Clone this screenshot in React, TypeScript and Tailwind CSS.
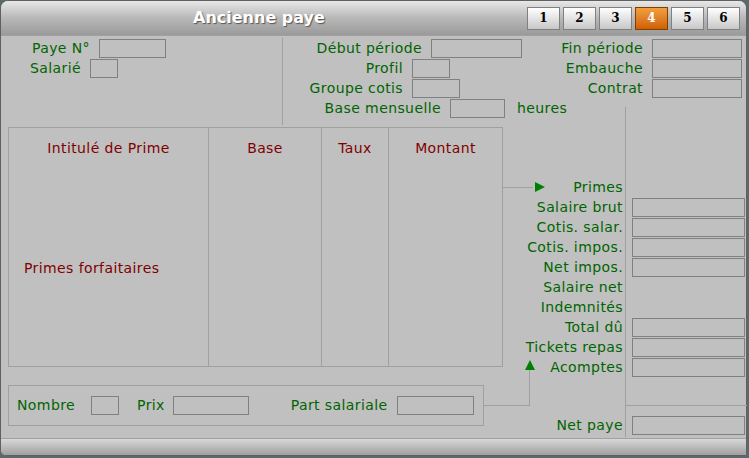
import React from "react";

const G = "text-[#006400]";
const Box = ({ w }: { w: number }) => <div className="shrink-0 h-[19px] border border-[#808080]" style={{ width: w }} />;
const Row = ({ t, w, c = G }: { t: string; w?: number; c?: string }) => (
  <div className="flex items-center justify-end gap-[9px] h-[20px]">
    <span className={`whitespace-nowrap ${c}`}>{t}</span>
    {w ? <Box w={w} /> : null}
  </div>
);
const Line = ({ x, y, w, h }: { x: number; y: number; w: number; h: number }) => (
  <div className="absolute bg-[#a0a0a0]" style={{ left: x, top: y, width: w, height: h }} />
);

export default function App() {
  const right: [string, boolean][] = [
    ["Primes", false], ["Salaire brut", true], ["Cotis. salar.", true], ["Cotis. impos.", true],
    ["Net impos.", true], ["Salaire net", false], ["Indemnités", false], ["Total dû", true],
    ["Tickets repas", true], ["Acomptes", true],
  ];
  return (
    <div className="relative w-[749px] h-[458px] bg-[#5a6a6a] overflow-hidden text-[14px] tracking-[0.4px]" style={{ fontFamily: "'DejaVu Sans', Verdana, sans-serif" }}>
      <div className="absolute inset-0 right-[2px] bottom-[2px] bg-[#c0c0c0] rounded-t-[8px] rounded-bl-[6px] border border-[#606060] overflow-hidden flex flex-col">
        <div className="h-[35px] shrink-0 bg-gradient-to-b from-[#e8e8e8] via-[#b8b8b8] to-[#9a9a9a] border-b border-[#a0a0a0] flex items-center pl-[192px] pr-[6px]">
          <div className="flex-1 text-white font-bold text-[16px] tracking-normal [text-shadow:1px_1px_1px_#555]">Ancienne paye</div>
          <div className="flex gap-[3px]">
            {[1, 2, 3, 4, 5, 6].map((n) => (
              <div key={n} className={`w-[33px] h-[23px] flex items-center justify-center font-bold text-[12px] border ${n === 4 ? "bg-gradient-to-b from-[#f0a040] to-[#d06000] text-white border-[#804000]" : "bg-gradient-to-b from-white to-[#c8c8c8] text-black border-[#808080]"}`} style={{ fontFamily: "'DejaVu Serif', serif" }}>{n}</div>
            ))}
          </div>
        </div>
        <div className="flex-1" />
        <div className="h-[17px] shrink-0 bg-gradient-to-b from-[#d8d8d8] to-[#a0a0a0] border-t border-[#a0a0a0]" />
      </div>

      {/* top area */}
      <div className="absolute left-0 top-[38px] w-[749px] flex">
        <div className="w-[166px] flex flex-col items-end">
          <Row t="Paye N°" w={67} />
          <div className="pr-[48px]"><Row t="Salarié" w={28} /></div>
        </div>
        <div className="w-[117px] h-[87px] border-r border-[#a0a0a0]" />
        <div className="w-[239px] flex flex-col items-end">
          <Row t="Début période" w={91} />
          <div className="pr-[72px]"><Row t="Profil" w={38} /></div>
          <div className="pr-[62px]"><Row t="Groupe cotis" w={48} /></div>
          <div className="pr-[17px]"><Row t="Base mensuelle" w={55} /></div>
        </div>
        <div className="w-[220px] flex flex-col items-end">
          <Row t="Fin période" w={90} />
          <Row t="Embauche" w={90} />
          <Row t="Contrat" w={90} />
        </div>
      </div>
      <div className={`absolute left-[517px] top-[98px] ${G}`}>heures</div>

      <div className="absolute left-[8px] top-[127px] w-[495px] h-[240px] border border-[#a0a0a0] grid grid-cols-[200px_113px_67px_1fr]">
        {["Intitulé de Prime", "Base", "Taux", "Montant"].map((t, i) => (
          <div key={i} className={`text-[#800000] text-center pt-[10px] ${i < 3 ? "border-r border-[#a0a0a0]" : ""}`}>{t}</div>
        ))}
      </div>
      <div className="absolute left-[24px] top-[258px] text-[#800000]">Primes forfaitaires</div>

      <Line x={625} y={107} w={1} h={330} />
      <Line x={625} y={405} w={122} h={1} />
      <Line x={503} y={187} w={30} h={1} />
      <div className="absolute left-[535px] top-[182px] w-0 h-0 border-y-[5px] border-y-transparent border-l-[10px] border-l-[#008000]" />
      <Line x={484} y={405} w={46} h={1} />
      <Line x={529} y={370} w={1} h={36} />
      <div className="absolute left-[525px] top-[360px] w-0 h-0 border-x-[5px] border-x-transparent border-b-[10px] border-b-[#008000]" />

      <div className="absolute left-[500px] top-[177px] w-[245px] flex flex-col">
        {right.map(([t, inp]) => (
          <div key={t} className="flex items-center h-[20px] gap-[9px]">
            <span className={`flex-1 text-right whitespace-nowrap ${G}`}>{t}</span>
            <div className="w-[113px] shrink-0">{inp && <Box w={113} />}</div>
          </div>
        ))}
      </div>
      <div className="absolute left-[500px] top-[415px] w-[245px] flex items-center h-[20px] gap-[9px]">
        <span className={`flex-1 text-right ${G}`}>Net paye</span>
        <Box w={113} />
      </div>

      <div className="absolute left-[8px] top-[385px] w-[476px] h-[41px] border border-[#a0a0a0] flex items-center pl-[8px]">
        <span className={G}>Nombre</span>
        <div className="ml-[16px]"><Box w={28} /></div>
        <span className={`${G} ml-[18px]`}>Prix</span>
        <div className="ml-[8px]"><Box w={76} /></div>
        <span className={`${G} ml-[42px]`}>Part salariale</span>
        <div className="ml-[9px]"><Box w={77} /></div>
      </div>
    </div>
  );
}
